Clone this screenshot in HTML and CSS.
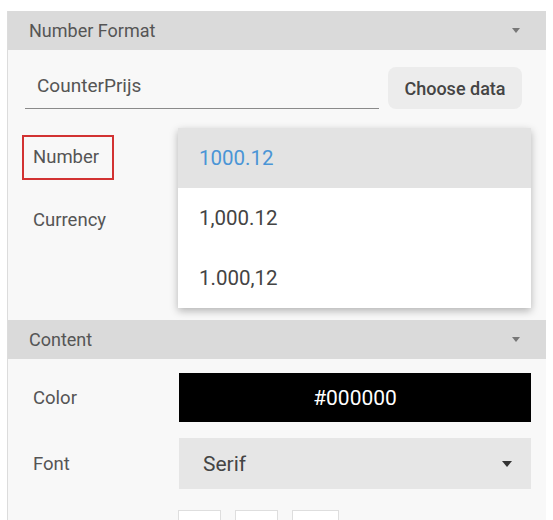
FILE: index.html
```html
<!DOCTYPE html>
<html lang="en">
<head>
    <meta charset="UTF-8">
    <meta name="viewport" content="width=device-width, initial-scale=1.0">
    <title>Number Format</title>
    <link rel="stylesheet" href="styles.css">
</head>
<body>
    <div class="panel">
        <!-- Number Format -->
        <div class="section-head">
            <span>Number Format</span>
            <span class="caret"></span>
        </div>
        <div class="section-body first">
            <div class="data-row">
                <div class="data-input">CounterPrijs</div>
                <button class="choose-btn">Choose data</button>
            </div>

            <div class="row number-row">
                <div class="label marked">Number</div>
                <div class="control">
                    <div class="menu">
                        <div class="menu-item selected">1000.12</div>
                        <div class="menu-item">1,000.12</div>
                        <div class="menu-item">1.000,12</div>
                    </div>
                </div>
            </div>
            <div class="row">
                <div class="label">Currency</div>
                <div class="control"></div>
            </div>
        </div>

        <!-- Content -->
        <div class="section-head">
            <span>Content</span>
            <span class="caret"></span>
        </div>
        <div class="section-body">
            <div class="row color-row">
                <div class="label">Color</div>
                <div class="color-box">#000000</div>
            </div>
            <div class="row font-row">
                <div class="label">Font</div>
                <div class="select">
                    <span>Serif</span>
                    <span class="select-caret"></span>
                </div>
            </div>
            <div class="row style-row">
                <div class="label"></div>
                <div class="toggles">
                    <div class="toggle"></div>
                    <div class="toggle"></div>
                    <div class="toggle wide"></div>
                </div>
            </div>
        </div>
    </div>
</body>
</html>
```

FILE: styles.css
```css
body {
    margin: 0;
    background: #fff;
    font-family: Roboto, "Liberation Sans", sans-serif;
    color: #555;
    overflow: hidden;
}
.panel {
    margin: 11px 7px 0 7px;
    background: #f8f8f8;
    border-left: 1px solid #dcdcdc;
    height: 509px;
    overflow: hidden;
}
.section-head {
    height: 39px;
    background: #dadada;
    display: flex;
    align-items: center;
    justify-content: space-between;
    padding: 0 26px 0 21px;
    font-size: 18px;
    color: #555;
}
.caret {
    width: 0;
    height: 0;
    border-left: 4px solid transparent;
    border-right: 4px solid transparent;
    border-top: 5px solid #777;
}
.section-body {
    padding-bottom: 1px;
}
.section-body.first {
    padding-bottom: 75px;
}
.data-row {
    display: flex;
    align-items: center;
    margin-top: 17px;
    height: 42px;
}
.data-input {
    margin-left: 17px;
    width: 342px;
    padding-left: 12px;
    height: 40px;
    line-height: 36px;
    border-bottom: 1px solid #8a8a8a;
    font-size: 19px;
    color: #555;
}
.choose-btn {
    margin-left: 9px;
    width: 134px;
    height: 42px;
    border: none;
    border-radius: 8px;
    background: #ececec;
    font-family: inherit;
    font-size: 18px;
    font-weight: 500;
    color: #444;
    padding: 0;
}
.row {
    display: grid;
    grid-template-columns: 171px 352px;
    align-items: center;
    height: 50px;
    margin-top: 13px;
}
.row.number-row {
    margin-top: 23px;
}
.label {
    margin-left: 14px;
    justify-self: start;
    height: 45px;
    padding: 0 9px;
    border: 2px solid transparent;
    box-sizing: border-box;
    display: flex;
    align-items: center;
    font-size: 18.5px;
    color: #555;
}
.label.marked {
    border-color: #d23232;
    width: 92px;
}
.control {
    position: relative;
    height: 50px;
}
.menu {
    position: absolute;
    top: -4px;
    left: -1px;
    right: 0;
    background: #fff;
    box-shadow: 0 3px 8px rgba(0, 0, 0, 0.28);
    z-index: 2;
}
.menu-item {
    height: 60px;
    display: flex;
    align-items: center;
    padding-left: 21px;
    font-size: 20.5px;
    color: #444;
}
.menu-item.selected {
    background: #e3e3e3;
    color: #4a95d6;
}
.color-row {
    margin-top: 14px;
    height: 49px;
}
.color-box {
    height: 49px;
    background: #000;
    color: #fff;
    display: flex;
    align-items: center;
    justify-content: center;
    font-size: 21px;
}
.font-row {
    margin-top: 16px;
    height: 51px;
}
.select {
    height: 51px;
    background: #e6e6e6;
    display: flex;
    align-items: center;
    justify-content: space-between;
    padding: 0 19px 0 24px;
    font-size: 21px;
    color: #444;
}
.select-caret {
    width: 0;
    height: 0;
    border-left: 5px solid transparent;
    border-right: 5px solid transparent;
    border-top: 6px solid #333;
}
.style-row {
    margin-top: 21px;
    align-items: start;
}
.toggles {
    display: flex;
    gap: 14px;
    margin-left: -1px;
}
.toggle {
    width: 43px;
    height: 40px;
    border: 1px solid #dedede;
    background: #fff;
    box-sizing: border-box;
}
.toggle.wide {
    width: 47px;
}
```
